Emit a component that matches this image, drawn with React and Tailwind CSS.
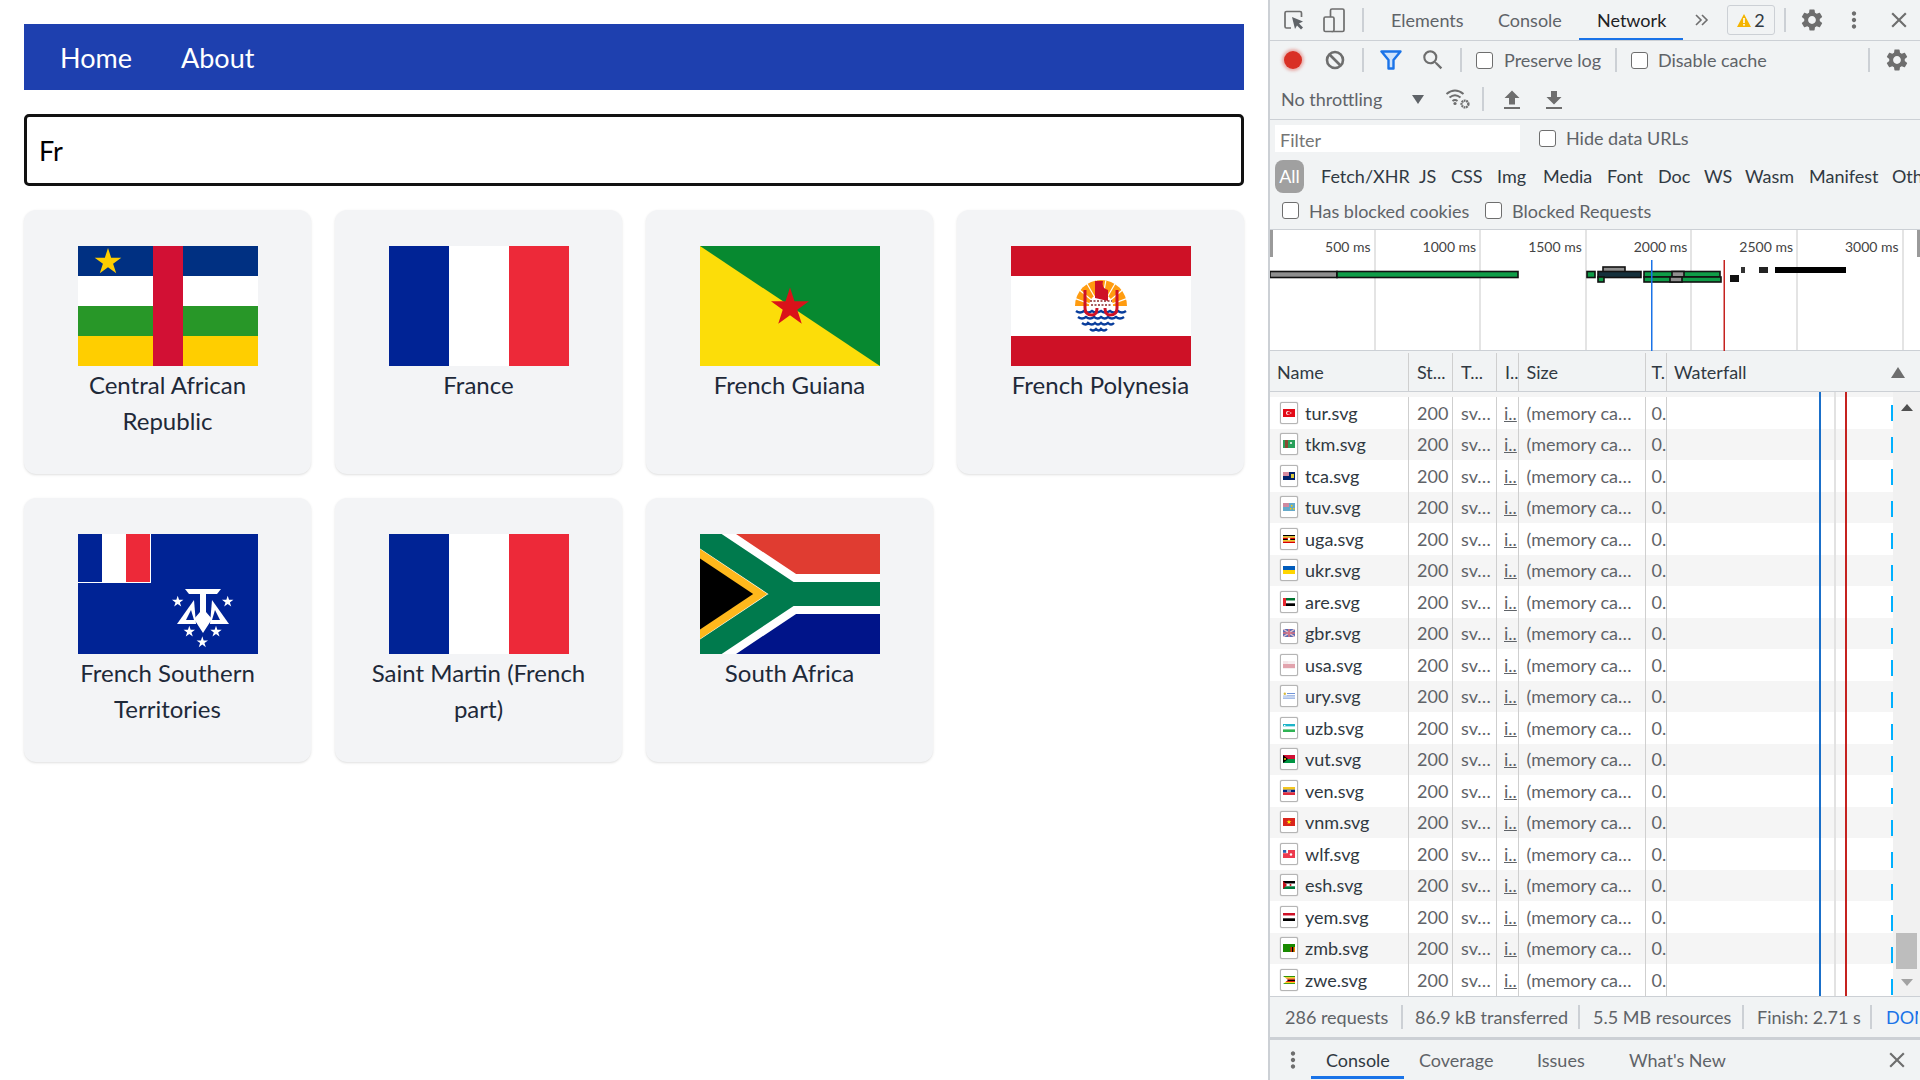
import React from "react";
import { MdSettings, MdMoreVert, MdClose, MdSearch } from "react-icons/md";

const star = (cx, cy, r, fill) => {
  const pts = [];
  for (let i = 0; i < 10; i++) {
    const a = -Math.PI / 2 + (i * Math.PI) / 5;
    const d = i % 2 ? r * 0.382 : r;
    pts.push(`${(cx + d * Math.cos(a)).toFixed(2)},${(cy + d * Math.sin(a)).toFixed(2)}`);
  }
  return <polygon points={pts.join(" ")} fill={fill} />;
};

const FlagSvg = ({ children }) => (
  <svg width="180" height="120" viewBox="0 0 180 120" className="block shrink-0">{children}</svg>
);

const FranceFlag = () => (
  <FlagSvg>
    <rect width="60" height="120" fill="#002395" />
    <rect x="60" width="60" height="120" fill="#fff" />
    <rect x="120" width="60" height="120" fill="#ed2939" />
  </FlagSvg>
);

const CafFlag = () => (
  <FlagSvg>
    <rect width="180" height="30" fill="#003082" />
    <rect y="30" width="180" height="30" fill="#fff" />
    <rect y="60" width="180" height="30" fill="#289728" />
    <rect y="90" width="180" height="30" fill="#ffce00" />
    <rect x="75" width="30" height="120" fill="#d21034" />
    {star(30, 16, 14, "#ffce00")}
  </FlagSvg>
);

const GuianaFlag = () => (
  <FlagSvg>
    <rect width="180" height="120" fill="#078930" />
    <polygon points="0,0 180,120 0,120" fill="#fcdd09" />
    {star(90, 61.5, 20, "#da121a")}
  </FlagSvg>
);

const PolynesiaFlag = () => (
  <FlagSvg>
    <rect width="180" height="120" fill="#ce1126" />
    <rect y="30" width="180" height="60" fill="#fff" />
    <path d="M64,60 A26,26 0 0 1 116,60 Z" fill="#ff9c10" />
    {[-90, -70, -50, -30, -10, 10, 30, 50, 70, 90].map((a) => (
      <line key={a} x1="90" y1="62" x2={90 + 28 * Math.sin((a * Math.PI) / 180)} y2={62 - 28 * Math.cos((a * Math.PI) / 180)} stroke="#fff" strokeWidth="1.2" />
    ))}
    <circle cx="90" cy="60" r="12" fill="#fff" />
    <path d="M84,35 H92 Q90,42 97,44 V55 L84,52 Z" fill="#ce1126" />
    <rect x="79" y="55" width="22" height="7" fill="#fff" />
    <path d="M79,55 H101 M80,59 H100" stroke="#8a2a2a" strokeWidth="1.4" strokeDasharray="2 1.5" />
    <path d="M66,66 Q90,72 114,66 L112,72 Q100,86 90,87 Q80,86 68,72 Z" fill="#fff" />
    <path d="M65,65 q4,3 8,0 q4,3 8,0 q4,3 9,0 q4,3 9,0 q4,3 8,0 q4,3 8,0 M67,71 q4,3 8,0 q4,3 8,0 q4,3 7,0 q4,3 7,0 q4,3 8,0 q4,3 8,0 M71,77 q4,3 6,0 q4,3 7,0 q3,3 6,0 q3,3 7,0 q3,3 6,0 M79,83 q3,3 6,0 q3,3 5,0 q3,3 6,0" fill="none" stroke="#083d9c" strokeWidth="2.4" />
    <path d="M74,44 V62 Q74,69 81,69 Q86,69 86,62 M106,44 V62 Q106,69 99,69 Q94,69 94,62" fill="none" stroke="#ce1126" strokeWidth="3" />
  </FlagSvg>
);

const TaafFlag = () => (
  <FlagSvg>
    <rect width="180" height="120" fill="#002395" />
    <rect width="73" height="49" fill="#fff" />
    <rect width="24" height="48" fill="#002395" />
    <rect x="48" width="24" height="48" fill="#ed2939" />
    <polygon points="107,55 143,55 139,60 111,60" fill="#fff" />
    <polygon points="122,60 128,60 128,78 134,85 125,99 116,85 122,78" fill="#fff" />
    <polygon points="116,66 99,90 118,90" fill="#fff" />
    <polygon points="134,66 151,90 132,90" fill="#fff" />
    <polygon points="113,76 108,86 116,86" fill="#002395" />
    <polygon points="137,76 142,86 134,86" fill="#002395" />
    {star(99.7, 67.7, 6, "#fff")}
    {star(149.7, 67.7, 6, "#fff")}
    {star(111.3, 97.7, 6, "#fff")}
    {star(138, 97.7, 6, "#fff")}
    {star(124.3, 108.3, 6, "#fff")}
  </FlagSvg>
);

const ZafFlag = () => (
  <FlagSvg>
    <g transform="scale(0.2)">
      <rect width="900" height="300" fill="#e03c31" />
      <rect y="300" width="900" height="300" fill="#001489" />
      <path d="M0,0 L450,300 L0,600 M450,300 H900" fill="none" stroke="#fff" strokeWidth="200" />
      <path d="M0,0 L450,300 L0,600 M450,300 H900" fill="none" stroke="#007a4d" strokeWidth="120" />
      <polygon points="0,75 337,300 0,525" fill="#ffb81c" />
      <polygon points="0,122 266,300 0,478" fill="#000" />
    </g>
  </FlagSvg>
);

const cards = [
  { name: "Central African Republic", Flag: CafFlag },
  { name: "France", Flag: FranceFlag },
  { name: "French Guiana", Flag: GuianaFlag },
  { name: "French Polynesia", Flag: PolynesiaFlag },
  { name: "French Southern Territories", Flag: TaafFlag },
  { name: "Saint Martin (French part)", Flag: FranceFlag },
  { name: "South Africa", Flag: ZafFlag },
];

const S = ({ c, y, h }) => <rect y={y} width="12" height={h} fill={c} />;
const files = [
  ["tur", <><rect width="12" height="8" fill="#e30a17" /><circle cx="5" cy="4" r="2" fill="#fff" /><circle cx="5.6" cy="4" r="1.5" fill="#e30a17" /><rect x="7" y="3.5" width="1.4" height="1" fill="#fff" /></>],
  ["tkm", <><rect width="12" height="8" fill="#28a05a" /><rect x="2" width="3" height="8" fill="#8a4a32" /><circle cx="8" cy="3" r="1" fill="#fff" /></>],
  ["tca", <><rect width="12" height="8" fill="#012169" /><rect width="6" height="4" fill="#d98ca0" /><rect x="8" y="2" width="3" height="4" fill="#d8c83a" /></>],
  ["tuv", <><rect width="12" height="8" fill="#64aacb" /><rect width="6" height="4" fill="#cf8aa0" /><rect x="8" y="2" width="1.5" height="1.5" fill="#ffce00" /><rect x="7" y="5" width="1.5" height="1.5" fill="#ffce00" /><rect x="10" y="5" width="1.5" height="1.5" fill="#ffce00" /></>],
  ["uga", <><S c="#000" y={0} h={1.4} /><S c="#fcdc04" y={1.4} h={1.3} /><S c="#d90000" y={2.7} h={1.3} /><S c="#000" y={4} h={1.3} /><S c="#fcdc04" y={5.3} h={1.3} /><S c="#d90000" y={6.6} h={1.4} /><circle cx="6" cy="4" r="1.3" fill="#fff" /></>],
  ["ukr", <><S c="#005bbb" y={0} h={4} /><S c="#ffd500" y={4} h={4} /></>],
  ["are", <><S c="#00732f" y={0} h={2.7} /><S c="#fff" y={2.7} h={2.6} /><S c="#000" y={5.3} h={2.7} /><rect width="3" height="8" fill="#e8262e" /></>],
  ["gbr", <><rect width="12" height="8" fill="#5a6fb5" /><path d="M0,0 L12,8 M12,0 L0,8" stroke="#e9c3cc" strokeWidth="1.4" /><path d="M6,0 V8 M0,4 H12" stroke="#d8707f" strokeWidth="1.6" /></>],
  ["usa", <><rect width="12" height="8" fill="#f6eef0" /><S c="#e2a3ad" y={3} h={4} /><rect width="5" height="3" fill="#f4e5e8" /></>],
  ["ury", <><rect width="12" height="8" fill="#fff" /><S c="#6f93d8" y={1} h={1} /><S c="#6f93d8" y={3.4} h={1} /><S c="#6f93d8" y={5.6} h={1} /><rect x="0" y="0" width="4" height="3.5" fill="#fff" /><circle cx="1.8" cy="1.8" r="1.2" fill="#d8b93a" /></>],
  ["uzb", <><S c="#1eb5c9" y={0} h={2.6} /><S c="#fff" y={2.6} h={2.8} /><S c="#2fb354" y={5.4} h={2.6} /><rect x="1" y="1" width="1.4" height="1" fill="#fff" /></>],
  ["vut", <><S c="#d21034" y={0} h={4} /><S c="#009543" y={4} h={4} /><polygon points="0,0 5,4 0,8" fill="#000" /><circle cx="2" cy="4" r="1" fill="#fdce12" /></>],
  ["ven", <><S c="#f4c61f" y={0} h={2.7} /><S c="#00247d" y={2.7} h={2.6} /><S c="#e02d3c" y={5.3} h={2.7} /><rect x="4" y="3.5" width="4" height="1" fill="#fff" /></>],
  ["vnm", <><rect width="12" height="8" fill="#da251d" />{star(6, 4, 2.6, "#ffff00")}</>],
  ["wlf", <><rect width="12" height="8" fill="#ed3a4e" /><rect width="5" height="3.2" fill="#fff" /><rect width="3.2" height="2.8" fill="#2a5fb0" /><circle cx="8" cy="4.5" r="1.2" fill="#fff" /></>],
  ["esh", <><S c="#000" y={0} h={2.7} /><S c="#fff" y={2.7} h={2.6} /><S c="#007a3d" y={5.3} h={2.7} /><polygon points="0,0 4,4 0,8" fill="#c4111b" /><circle cx="7.5" cy="4" r="1" fill="#c4111b" /></>],
  ["yem", <><S c="#ce1126" y={0} h={2.7} /><S c="#fff" y={2.7} h={2.6} /><S c="#000" y={5.3} h={2.7} /></>],
  ["zmb", <><rect width="12" height="8" fill="#198a00" /><rect x="7.5" y="3" width="1.5" height="5" fill="#de2010" /><rect x="9" y="3" width="1.5" height="5" fill="#000" /><rect x="10.5" y="3" width="1.5" height="5" fill="#ef7d00" /></>],
  ["zwe", <><S c="#319208" y={0} h={1.3} /><S c="#ffd200" y={1.3} h={1.3} /><S c="#de2010" y={2.6} h={1.2} /><S c="#000" y={3.8} h={1.2} /><S c="#de2010" y={5} h={1.1} /><S c="#ffd200" y={6.1} h={1} /><S c="#319208" y={7.1} h={0.9} /><polygon points="0,0 5,4 0,8" fill="#fff" /></>],
];

const Check = () => <span className="block w-[17px] h-[17px] shrink-0 rounded-[3px] border border-[#6e6e6e] bg-white" />;
const Sep = ({ className = "" }) => <span className={`block w-[2px] h-6 shrink-0 bg-[#ccd0d5] ${className}`} />;

const Inspect = () => (
  <svg width="20" height="20" viewBox="0 0 20 20" className="block">
    <path d="M7 18 H2.5 A1.5 1.5 0 0 1 1 16.5 V3 A1.5 1.5 0 0 1 2.5 1.5 H16 A1.5 1.5 0 0 1 17.5 3 V7" fill="none" stroke="#6e6e6e" strokeWidth="1.7" />
    <polygon points="8,7 19,11.5 15,13.5 19,17.5 17,19.5 13,15.5 11,19" fill="#5f6368" />
  </svg>
);
const Device = () => (
  <svg width="22" height="25" viewBox="0 0 22 25" className="block">
    <rect x="7.5" y="1" width="13.5" height="22.5" rx="1.5" fill="none" stroke="#6e6e6e" strokeWidth="1.7" />
    <rect x="1" y="9" width="10" height="14.5" rx="1.5" fill="#f1f3f4" stroke="#6e6e6e" strokeWidth="1.7" />
  </svg>
);
const Block = () => (
  <svg width="20" height="20" viewBox="0 0 20 20" className="block">
    <circle cx="10" cy="10" r="8" fill="none" stroke="#6e6e6e" strokeWidth="2.6" />
    <line x1="4.5" y1="4.5" x2="15.5" y2="15.5" stroke="#6e6e6e" strokeWidth="2.6" />
  </svg>
);
const Funnel = () => (
  <svg width="22" height="20" viewBox="0 0 22 20" className="block">
    <path d="M1.5 1.5 H20.5 L13.5 10 V18.5 H8.5 V10 Z" fill="#cfe3fb" stroke="#1a73e8" strokeWidth="2.4" strokeLinejoin="round" />
  </svg>
);
const Wifi = () => (
  <svg width="26" height="22" viewBox="0 0 26 22" className="block">
    <path d="M1.5 6 Q10 -1 18.5 6 M4.5 9.5 Q10 5 15.5 9.5 M7.5 13 Q10 11 12.5 13" fill="none" stroke="#6e6e6e" strokeWidth="2" />
    <circle cx="10" cy="15.5" r="1.6" fill="#6e6e6e" />
    <circle cx="20" cy="16" r="3.4" fill="none" stroke="#6e6e6e" strokeWidth="2.4" strokeDasharray="1.8 0.6" />
  </svg>
);
const Arrow = ({ down }) => (
  <svg width="16" height="19" viewBox="0 0 16 19" className="block">
    {down ? <polygon points="5,1 11,1 11,7 15.5,7 8,14.5 0.5,7 5,7" fill="#6e6e6e" /> : <polygon points="5,14.5 11,14.5 11,8 15.5,8 8,0.5 0.5,8 5,8" fill="#6e6e6e" />}
    <rect y="17" width="16" height="2" fill="#6e6e6e" />
  </svg>
);

const Overview = () => (
  <svg width="650" height="121" viewBox="1270 230 650 121" className="absolute inset-0 block">
    <rect x="1270" y="230" width="3" height="27" fill="#9a9a9a" />
    <rect x="1917" y="230" width="3" height="27" fill="#9a9a9a" />
    <g stroke="#111" strokeWidth="1.6">
      <rect x="1270" y="271.5" width="67" height="6" fill="#8f8f8f" />
      <rect x="1337" y="271.5" width="181" height="6" fill="#0f9d48" />
      <rect x="1587" y="271.5" width="8" height="6" fill="#0f9d48" />
      <rect x="1603" y="267" width="22" height="5" fill="#8f8f8f" />
      <rect x="1598" y="271.5" width="43" height="6" fill="#14303c" />
      <rect x="1598" y="277" width="6" height="5" fill="#0f9d48" />
      <rect x="1644" y="271.5" width="76" height="5.5" fill="#0f9d48" />
      <rect x="1672" y="271.5" width="12" height="5.5" fill="#8f8f8f" />
      <rect x="1644" y="277" width="77" height="5" fill="#0f9d48" />
      <rect x="1670" y="277" width="12" height="5" fill="#8f8f8f" />
    </g>
    <rect x="1730" y="275" width="9" height="7" fill="#111" />
    <rect x="1741" y="267" width="4" height="6" fill="#333" />
    <rect x="1759" y="267" width="9" height="6" fill="#222" />
    <rect x="1775" y="267" width="71" height="6" fill="#000" />
    <rect x="1651" y="260" width="1.5" height="91" fill="#1a73e8" />
    <rect x="1723.5" y="260" width="1.5" height="91" fill="#c5221f" />
  </svg>
);

const Row = ({ name, icon, even }) => (
  <div className={`grid grid-cols-[139px_44px_44px_21.5px_127px_21.5px_1fr] h-[31.5px] items-stretch ${even ? "bg-[#f5f5f5]" : "bg-white"}`}>
    <div className="flex items-center pl-[10px] border-r border-[#cfcfcf] text-[#303942]">
      <span className="flex items-center justify-center w-[18px] h-[22px] shrink-0 bg-white border border-[#b5b5b5] rounded-[2px] shadow-[0_0_1px_rgba(0,0,0,0.4)]">
        <svg width="12" height="8" viewBox="0 0 12 8" className="block">{icon}</svg>
      </span>
      <span className="ml-[7px]">{name}.svg</span>
    </div>
    <div className="flex items-center pl-2 border-r border-[#cfcfcf]">200</div>
    <div className="flex items-center pl-2 border-r border-[#cfcfcf] overflow-hidden">sv…</div>
    <div className="flex items-center pl-[7px] border-r border-[#cfcfcf] overflow-hidden"><span className="underline">i..</span></div>
    <div className="flex items-center pl-2 border-r border-[#cfcfcf] overflow-hidden whitespace-nowrap">(memory ca…</div>
    <div className="flex items-center pl-[6px] border-r border-[#cfcfcf] overflow-hidden">0.</div>
    <div />
  </div>
);

const DevTools = () => (
  <div className="flex flex-col w-[652px] h-[1080px] shrink-0 border-l-2 border-[#ccd0d5] bg-[#f1f3f4] text-[18px] leading-none text-[#5f6368] overflow-hidden whitespace-nowrap">
    <div className="flex items-center h-[41px] pl-[14px] border-b border-[#ccd0d5] shrink-0">
      <div className="w-[39px] shrink-0"><Inspect /></div>
      <div className="w-[39px] shrink-0"><Device /></div>
      <Sep />
      <div className="w-[27px] shrink-0" />
      <div className="w-[107px] shrink-0">Elements</div>
      <div className="w-[81px] shrink-0">Console</div>
      <div className="flex items-center w-[104px] h-full shrink-0 pl-[18px] pt-[2px] border-b-2 border-[#1a73e8] text-[#202124]">Network</div>
      <div className="w-[12px] shrink-0" />
      <div className="w-[32px] shrink-0">
        <svg width="14" height="12" viewBox="0 0 14 12" className="block"><path d="M1 1 L6 6 L1 11 M7 1 L12 6 L7 11" fill="none" stroke="#6e6e6e" strokeWidth="1.6" /></svg>
      </div>
      <div className="flex items-center justify-center gap-[3px] w-[48px] h-[30px] shrink-0 rounded-[3px] border border-[#ccd0d5] text-[#303942]">
        <svg width="14" height="13" viewBox="0 0 14 13" className="block"><polygon points="7,0 14,13 0,13" fill="#f4b400" /><rect x="6.2" y="4" width="1.6" height="5" fill="#fff" /><rect x="6.2" y="10" width="1.6" height="1.6" fill="#fff" /></svg>
        <span>2</span>
      </div>
      <Sep className="ml-[9px]" />
      <MdSettings className="ml-[13px] shrink-0 text-[#6e6e6e]" size={26} />
      <MdMoreVert className="ml-[16px] shrink-0 text-[#6e6e6e]" size={26} />
      <MdClose className="ml-[19px] shrink-0 text-[#6e6e6e]" size={26} />
    </div>

    <div className="flex items-center h-[38px] pl-[14px] shrink-0">
      <div className="w-[18px] h-[18px] rounded-full bg-[#d93025] shadow-[0_0_3px_2px_rgba(217,48,37,0.35)] shrink-0" />
      <div className="ml-[23px] w-[20px] shrink-0"><Block /></div>
      <Sep className="ml-[17px]" />
      <div className="ml-[16px] w-[22px] shrink-0"><Funnel /></div>
      <MdSearch className="ml-[18px] shrink-0 text-[#6e6e6e]" size={26} />
      <Sep className="ml-[14px]" />
      <div className="ml-[14px] shrink-0"><Check /></div>
      <div className="ml-[11px] w-[111px] shrink-0">Preserve log</div>
      <Sep />
      <div className="ml-[14px] shrink-0"><Check /></div>
      <div className="ml-[10px] w-[210px] shrink-0">Disable cache</div>
      <Sep />
      <MdSettings className="ml-[14px] shrink-0 text-[#6e6e6e]" size={26} />
    </div>

    <div className="flex items-center h-[41px] pl-[11px] border-b border-[#ccd0d5] shrink-0">
      <div className="w-[131px] shrink-0">No throttling</div>
      <svg width="12" height="9" viewBox="0 0 12 9" className="block shrink-0"><polygon points="0,0 12,0 6,9" fill="#5f6368" /></svg>
      <div className="ml-[21px] w-[32px] shrink-0"><Wifi /></div>
      <Sep className="ml-[5px]" />
      <div className="ml-[20px] w-[16px] shrink-0"><Arrow /></div>
      <div className="ml-[26px] w-[16px] shrink-0"><Arrow down /></div>
    </div>

    <div className="flex items-center h-[37px] pl-[5px] shrink-0">
      <div className="flex items-center w-[245px] h-[27px] pt-[2px] pl-[5px] shrink-0 bg-white text-[#757575]">Filter</div>
      <div className="ml-[19px] shrink-0"><Check /></div>
      <div className="ml-[10px] mb-[2px]">Hide data URLs</div>
    </div>

    <div className="flex items-center h-[38px] pl-[5px] shrink-0 text-[#303942]">
      <div className="flex items-center justify-center w-[29px] h-[33px] shrink-0 rounded-[8px] bg-[#a0a0a0] text-white">All</div>
      <div className="ml-[17px] w-[98px] shrink-0">Fetch/XHR</div>
      <div className="w-[32px] shrink-0">JS</div>
      <div className="w-[46px] shrink-0">CSS</div>
      <div className="w-[46px] shrink-0">Img</div>
      <div className="w-[64px] shrink-0">Media</div>
      <div className="w-[51px] shrink-0">Font</div>
      <div className="w-[46px] shrink-0">Doc</div>
      <div className="w-[41px] shrink-0">WS</div>
      <div className="w-[64px] shrink-0">Wasm</div>
      <div className="w-[83px] shrink-0">Manifest</div>
      <div className="shrink-0">Other</div>
    </div>

    <div className="flex items-center h-[34px] pl-[12px] pb-[3px] shrink-0">
      <Check />
      <div className="ml-[10px] w-[176px] shrink-0">Has blocked cookies</div>
      <Check />
      <div className="ml-[10px] shrink-0">Blocked Requests</div>
    </div>

    <div className="relative flex h-[122px] shrink-0 bg-white border-y border-[#ccd0d5]">
      {["500 ms", "1000 ms", "1500 ms", "2000 ms", "2500 ms", "3000 ms"].map((t) => (
        <div key={t} className="w-[105.6px] h-full shrink-0 border-r-2 border-[#e4e4e4] pt-[9px] pr-[3px] text-right text-[14px] leading-[16px] text-[#444]">{t}</div>
      ))}
      <Overview />
    </div>

    <div className="grid grid-cols-[139px_44px_44px_21.5px_127px_21.5px_1fr] h-[41px] pt-[2px] shrink-0 border-b border-[#ccd0d5] text-[#303942] items-stretch">
      <div className="flex items-center pl-[7px] border-r border-[#cfcfcf]">Name</div>
      <div className="flex items-center pl-2 border-r border-[#cfcfcf]">St...</div>
      <div className="flex items-center pl-2 border-r border-[#cfcfcf]">T...</div>
      <div className="flex items-center pl-2 border-r border-[#cfcfcf]">I..</div>
      <div className="flex items-center pl-2 border-r border-[#cfcfcf]">Size</div>
      <div className="flex items-center pl-[6px] border-r border-[#cfcfcf]">T.</div>
      <div className="flex items-center justify-between pl-[7px] pr-[15px]">
        <span>Waterfall</span>
        <svg width="14" height="11" viewBox="0 0 14 11" className="block"><polygon points="7,0 14,11 0,11" fill="#6e6e6e" /></svg>
      </div>
    </div>

    <div className="relative h-[604px] shrink-0 bg-white overflow-hidden">
      <div className="h-[5px] bg-[#f5f5f5]" />
      {files.map(([n, icon], i) => <Row key={n} name={n} icon={icon} even={i % 2 === 1} />)}
      <div className="absolute top-0 bottom-0 left-[549px] w-[2px] bg-[#1a6fc9]" />
      <div className="absolute top-0 bottom-0 left-[564px] w-[2px] bg-[#e2e2e2]" />
      <div className="absolute top-0 bottom-0 left-[575px] w-[2px] bg-[#c5221f]" />
      {files.map(([n], i) => (
        <div key={n} className="absolute left-[621px] w-[2px] h-[16px] bg-[#00b0ff]" style={{ top: 13 + i * 31.9 }} />
      ))}
      <div className="absolute top-0 bottom-0 right-0 w-[27px] bg-[#f1f1f1]">
        <svg width="12" height="7" viewBox="0 0 12 7" className="absolute left-[8px] top-[12px] block"><polygon points="6,0 12,7 0,7" fill="#505050" /></svg>
        <div className="absolute left-[3px] top-[541px] w-[21px] h-[36px] bg-[#bdbdbd]" />
        <svg width="12" height="7" viewBox="0 0 12 7" className="absolute left-[8px] top-[587px] block"><polygon points="0,0 12,0 6,7" fill="#a3a3a3" /></svg>
      </div>
    </div>

    <div className="flex items-center h-[41px] pl-[15px] shrink-0 border-t border-[#ccd0d5]">
      <div className="w-[116px] shrink-0">286 requests</div>
      <Sep />
      <div className="ml-[12px] w-[163px] shrink-0">86.9 kB transferred</div>
      <Sep />
      <div className="ml-[13px] w-[149px] shrink-0">5.5 MB resources</div>
      <Sep />
      <div className="ml-[13px] w-[113px] shrink-0">Finish: 2.71 s</div>
      <Sep />
      <div className="ml-[14px] w-[32px] shrink-0 overflow-hidden text-[#1a73e8]">DOM</div>
    </div>

    <div className="flex items-center h-[42px] shrink-0 border-t-[3px] border-[#ccd0d5] text-[#5f6368]">
      <MdMoreVert className="ml-[10px] shrink-0 text-[#6e6e6e]" size={26} />
      <div className="flex items-center w-[93px] h-full ml-[5px] pl-[15px] pt-[3px] shrink-0 border-b-[3px] border-[#1a73e8] text-[#303942]">Console</div>
      <div className="ml-[15px] w-[118px] shrink-0">Coverage</div>
      <div className="w-[92px] shrink-0">Issues</div>
      <div className="w-[255px] shrink-0">What's New</div>
      <MdClose className="shrink-0 text-[#6e6e6e]" size={26} />
    </div>
  </div>
);

export default function App() {
  return (
    <div className="flex w-[1920px] h-[1080px] overflow-hidden bg-white font-['Lato','Noto_Sans',sans-serif]">
      <div className="w-[1268px] shrink-0 p-6">
        <nav className="flex items-center h-[66px] pl-9 pt-[3px] bg-[#1e40af] text-white text-[27px]">
          <div className="w-[121px] shrink-0">Home</div>
          <div>About</div>
        </nav>
        <div className="flex items-center h-[72px] mt-6 pl-[12px] pt-[3px] border-[3px] border-[#111] rounded-[5px] text-[27px] text-black">Fr</div>
        <div className="grid grid-cols-4 gap-6 mt-6">
          {cards.map(({ name, Flag }) => (
            <div key={name} className="flex flex-col items-center h-[264px] pt-9 px-9 rounded-xl bg-gray-100 shadow-sm">
              <Flag />
              <div className="mt-[1px] text-center text-[24px] leading-9 text-gray-800">{name}</div>
            </div>
          ))}
        </div>
      </div>
      <DevTools />
    </div>
  );
}
